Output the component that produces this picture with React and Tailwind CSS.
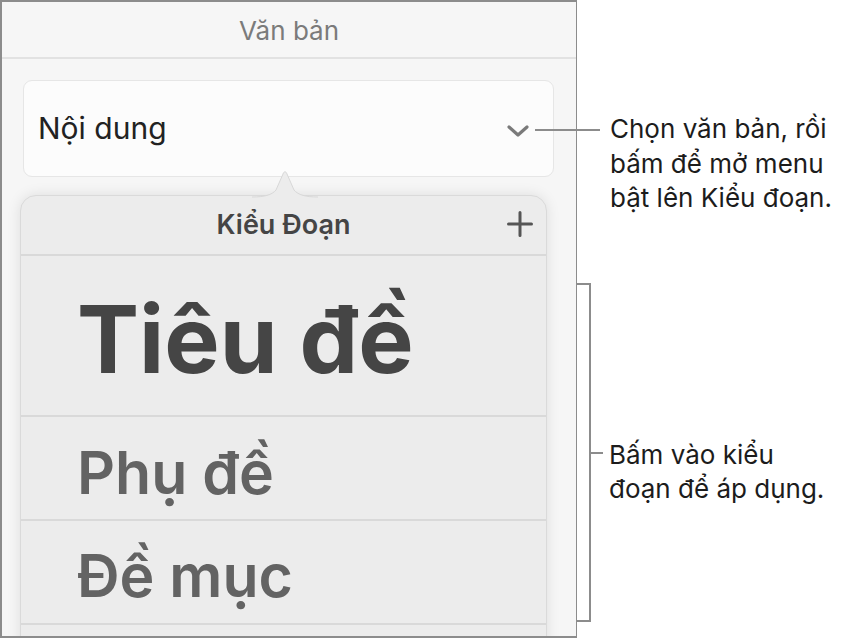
import { useState } from "react";

const styles = [
  { name: "Tiêu đề", cls: "h-[161px] text-[93px] font-bold text-[#454545]", off: "mt-[37px]" },
  { name: "Phụ đề", cls: "h-[104px] text-[59px] font-semibold text-[#636363]", off: "mt-[26px]" },
  { name: "Đề mục", cls: "h-[104px] text-[59px] font-semibold text-[#636363]", off: "mt-[25px]" },
];

function Chevron() {
  return (
    <svg width="24" height="14" viewBox="0 0 24 14" fill="none">
      <path d="M3 3 L12 11 L21 3" stroke="#7a7a7a" strokeWidth="3.2" strokeLinecap="round" strokeLinejoin="round" />
    </svg>
  );
}

function Plus() {
  return (
    <svg width="26" height="26" viewBox="0 0 26 26" fill="none">
      <path d="M13 1.5 V24.5 M1.5 13 H24.5" stroke="#555" strokeWidth="3" strokeLinecap="round" />
    </svg>
  );
}

export default function App() {
  const [active, setActive] = useState(null);

  return (
    <div className="flex w-[851px] h-[641px] bg-white font-['Inter','Noto_Sans',sans-serif]">
      {/* panel */}
      <div className="relative w-[577px] h-[638px] shrink-0 border-t-2 border-l-2 border-b-2 border-r border-[#8c8c8c] bg-[#f6f6f6] overflow-hidden">
        <div className="h-[57px] flex items-center justify-center text-[26px] text-[#7b7b7b] border-b-2 border-[#e2e2e2]">
          <span className="pt-[2px]">Văn bản</span>
        </div>
        <div className="ml-[21px] w-[531px] mt-[21px] h-[97px] rounded-[9px] border border-[#e6e6e6] bg-[#fcfcfc] flex items-center justify-between pl-[14px] pr-[23px]">
          <span className="text-[30px] text-[#222] pb-[1px]">Nội dung</span>
          <span className="pt-[4px]">
            <Chevron />
          </span>
        </div>

        {/* caret of popover */}
        <svg className="absolute left-[250px] top-[166px]" width="66" height="30" viewBox="0 0 66 30">
          <path d="M0 29 C12 29 20 27 24 22 L31 6 C32 3 34 3 35 6 L42 22 C46 27 54 29 66 29 Z" fill="#ececec" />
          <path d="M0 29 C12 29 20 27 24 22 L31 6 C32 3 34 3 35 6 L42 22 C46 27 54 29 66 29" fill="none" stroke="#d8d8d8" strokeWidth="1" />
        </svg>

        <div className="ml-[18px] w-[527px] mt-[18px] h-[460px] rounded-t-[16px] bg-[#ececec] border border-[#dadada] shadow-[0_0_14px_rgba(0,0,0,0.10)] overflow-hidden">
          <div className="relative h-[60px] flex items-center justify-center border-b-2 border-[#d9d9d9]">
            <span className="text-[27px] font-semibold text-[#454545]">Kiểu Đoạn</span>
            <span className="absolute right-[13px] top-[15px]">
              <Plus />
            </span>
          </div>
          {styles.map((s, i) => (
            <div
              key={s.name}
              onClick={() => setActive(i)}
              className={`flex items-start pl-[56px] border-b-2 border-[#d9d9d9] leading-none cursor-pointer ${s.cls} ${active === i ? "bg-[#e2e2e2]" : ""}`}
            >
              <span className={s.off}>{s.name}</span>
            </div>
          ))}
        </div>
      </div>

      {/* annotations */}
      <div className="relative flex-1 flex flex-col text-[26px] leading-[34.5px] text-[#1c1c1c]">
        <div className="absolute left-[-42px] top-[129px] w-[65px] h-[2px] bg-[#8c8c8c]" />
        <div className="mt-[112px] pl-[33px]">
          <div>Chọn văn bản, rồi</div>
          <div>bấm để mở menu</div>
          <div>bật lên Kiểu đoạn.</div>
        </div>
        <div className="mt-[67px] flex">
          <div className="w-[14px] h-[339px] border-t-2 border-b-2 border-r-2 border-[#8c8c8c]" />
          <div className="flex items-start mt-[155px]">
            <div className="w-[12px] h-[2px] bg-[#8c8c8c] mt-[14px]" />
            <div className="pl-[6px]">
              <div>Bấm vào kiểu</div>
              <div>đoạn để áp dụng.</div>
            </div>
          </div>
        </div>
      </div>
    </div>
  );
}
